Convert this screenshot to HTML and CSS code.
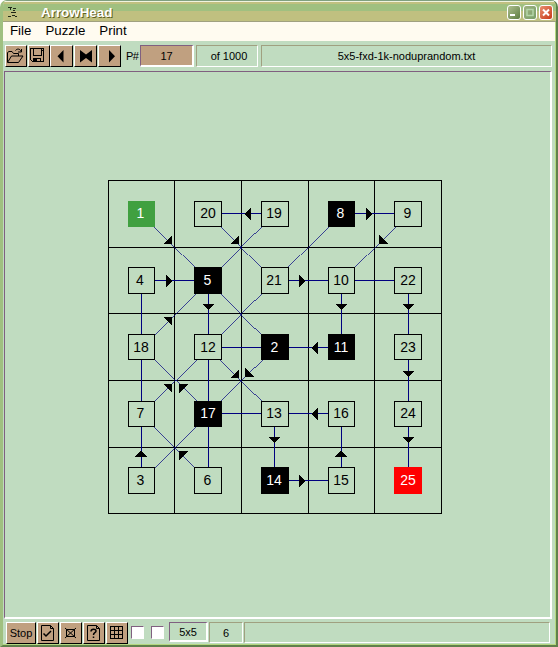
FILE: index.html
```html
<!DOCTYPE html>
<html lang="en">
<head>
<meta charset="utf-8">
<title>ArrowHead</title>
<link rel="stylesheet" href="styles.css">
</head>
<body>
<div class="window">
  <header class="titlebar">
    <svg class="app-icon" width="16" height="16" fill="none" stroke="#202818" shape-rendering="crispEdges"><path d="M0 2.500h4M5 3.500h3M2.500 3v2M5 5.500h2M3 7.500h5M0 11.500h3M4 10.500h3M7 11.500h2"/></svg>
    <span class="title">ArrowHead</span>
    <span class="caption min"><svg width="12" height="13"><path d="M2 9h5" stroke="#fff" stroke-width="2"/></svg></span>
    <span class="caption max"><svg width="12" height="13"><path d="M3 3.500h6v6h-6z" stroke="#b4d6a8" stroke-width="1.500" fill="none"/></svg></span>
    <span class="caption close"><svg width="12" height="13"><path d="M3 3.500l6 6M9 3.500l-6 6" stroke="#fff" stroke-width="2"/></svg></span>
  </header>
  <nav class="menu"><span>File</span><span>Puzzle</span><span>Print</span></nav>
  <div class="toolbar">
    <button class="btn b1"><svg width="20" height="20" fill="none" stroke="#000"><path d="M1.500 16V6.500L3 5.500h3l1.500 2h5V10M1.500 16.500l4-6.500H17l-4.500 6.500zM9.500 4.500C11 2.500 14 2.500 15 5.500M15.500 3v3H12"/></svg></button>
    <button class="btn b2"><svg width="20" height="20" fill="none" stroke="#000" shape-rendering="crispEdges"><path d="M1.500 2.500h13v13h-11l-2-2zM4.500 3v6h8V3M13 4.500h1M4.500 16v-4h7v4"/><path d="M5 12h3v4h-3z" fill="#000" stroke="none"/></svg></button>
    <button class="btn b3"><svg width="20" height="20"><path d="M11.500 4v12.500L5.500 10.250z"/></svg></button>
    <button class="btn b4"><svg width="20" height="20"><path d="M4 4v12.500l6-4.500 6 4.500V4l-6 4.500z"/></svg></button>
    <button class="btn b5"><svg width="20" height="20"><path d="M9 4v12.500l6-6.250z"/></svg></button>
    <span class="label">P#</span>
    <span class="field number">17</span>
    <span class="panel count">of 1000</span>
    <span class="panel file">5x5-fxd-1k-noduprandom.txt</span>
  </div>
  <main class="client">
    <svg class="board" width="336" height="336" viewBox="107 179 336 336">
      <g class="cells">
        <path d="M108.500 180v334M174.500 180v334M241.500 180v334M308.500 180v334M374.500 180v334M441.500 180v334M108 180.500h334M108 247.500h334M108 313.500h334M108 380.500h334M108 447.500h334M108 513.500h334"/>
      </g>
      <g class="links">
        <path d="M208.500 213.500H274.500M341.500 213.500H408.500M141.500 280.500H208.500V480.500M141.500 280.500V480.500M274.500 280.500H408.500V480.500M341.500 280.500V347.500H208.500M208.500 413.500H341.500V480.500H274.500V413.500"/>
        <path class="diagonal" d="M141.500 213.500L208.500 280.500L274.500 347.500M274.500 213.500L208.500 280.500L141.500 347.500M208.500 213.500L274.500 280.500M141.500 480.500L208.500 413.500L274.500 347.500M341.500 213.500L274.500 280.500L208.500 347.500L141.500 413.500L208.500 480.500M408.500 213.500L341.500 280.500M208.500 347.500L274.500 413.500M141.500 347.500L208.500 413.500"/>
      </g>
      <g class="arrows">
        <path d="M166 275v12l6.500-6zM366 208v12l6.500-6zM299 275v12l6.500-6zM299 475v12l6.500-6z"/>
        <path d="M251 208v12l-6.500-6zM318 342v12l-6.500-6zM318 408v12l-6.500-6z"/>
        <path d="M202.500 304h12l-6 6.500zM335.500 304h12l-6 6.500zM402.500 304h12l-6 6.500zM402.500 371h12l-6 6.500zM402.500 437h12l-6 6.500zM268.500 437h12l-6 6.500z"/>
        <path d="M135 457h12l-6-6.500zM335 457h12l-6-6.500z"/>
        <path d="M172 235v9h-9zM239 235v9h-9zM172 326v-9h-9zM379 235v9h9zM239 369v9h-9zM245 368v9h9zM172 393v-9h-9zM179 393v-9h9zM179 460v-9h9z"/>
      </g>
      <g class="nodes">
        <rect class="start" x="128.500" y="201.500" width="26" height="25"/>
        <rect x="194.500" y="201.500" width="27" height="25"/>
        <rect x="261.500" y="201.500" width="27" height="25"/>
        <rect class="given" x="328.500" y="201.500" width="26" height="25"/>
        <rect x="394.500" y="201.500" width="27" height="25"/>
        <rect x="128.500" y="267.500" width="26" height="26"/>
        <rect class="given" x="194.500" y="267.500" width="27" height="26"/>
        <rect x="261.500" y="267.500" width="27" height="26"/>
        <rect x="328.500" y="267.500" width="26" height="26"/>
        <rect x="394.500" y="267.500" width="27" height="26"/>
        <rect x="128.500" y="334.500" width="26" height="25"/>
        <rect x="194.500" y="334.500" width="27" height="25"/>
        <rect class="given" x="261.500" y="334.500" width="27" height="25"/>
        <rect class="given" x="328.500" y="334.500" width="26" height="25"/>
        <rect x="394.500" y="334.500" width="27" height="25"/>
        <rect x="128.500" y="401.500" width="26" height="25"/>
        <rect class="given" x="194.500" y="401.500" width="27" height="25"/>
        <rect x="261.500" y="401.500" width="27" height="25"/>
        <rect x="328.500" y="401.500" width="26" height="25"/>
        <rect x="394.500" y="401.500" width="27" height="25"/>
        <rect x="128.500" y="467.500" width="26" height="26"/>
        <rect x="194.500" y="467.500" width="27" height="26"/>
        <rect class="given" x="261.500" y="467.500" width="27" height="26"/>
        <rect x="328.500" y="467.500" width="26" height="26"/>
        <rect class="end" x="394.500" y="467.500" width="27" height="26"/>
      </g>
      <g class="nums">
        <text class="lit" x="140.500" y="218">1</text><text x="208" y="218">20</text><text x="274" y="218">19</text><text class="lit" x="340.500" y="218">8</text><text x="407.500" y="218">9</text>
        <text x="140" y="285">4</text><text class="lit" x="207.500" y="285">5</text><text x="274" y="285">21</text><text x="341" y="285">10</text><text x="408" y="285">22</text>
        <text x="141" y="352">18</text><text x="208" y="352">12</text><text class="lit" x="274.500" y="352">2</text><text class="lit" x="341" y="352">11</text><text x="408" y="352">23</text>
        <text x="140.500" y="418">7</text><text class="lit" x="208" y="418">17</text><text x="274" y="418">13</text><text x="341" y="418">16</text><text x="408" y="418">24</text>
        <text x="140.500" y="485">3</text><text x="207.500" y="485">6</text><text class="lit" x="274" y="485">14</text><text x="341" y="485">15</text><text class="lit" x="408" y="485">25</text>
      </g>
    </svg>
  </main>
  <footer class="statusbar">
    <button class="btn stop">Stop</button>
    <button class="btn s1"><svg width="20" height="20" fill="none" stroke="#000"><path d="M3.500 2.500h9l3 3v12h-12zM12.500 2.500v3h3"/><path d="M5.500 10.500l2.500 2.500 5-5" stroke-width="1.500"/></svg></button>
    <button class="btn s2"><svg width="20" height="20" fill="none" stroke="#000"><path d="M5.500 6.500h8v7h-8zM4 5l11 10M15 5L4 15"/></svg></button>
    <button class="btn s3"><svg width="20" height="20" fill="none" stroke="#000"><path d="M3.500 2.500h9l3 3v12h-12zM12.500 2.500v3h3"/><path d="M7 8.500c0-3 5-3 5-.5 0 2-2.500 1.500-2.500 4M9.500 13.500v1.500" stroke-width="1.500"/></svg></button>
    <button class="btn s4"><svg width="20" height="20" fill="none" stroke="#000" shape-rendering="crispEdges"><path d="M3.500 3.500h12v12h-12zM7.500 3v13M11.500 3v13M3 7.500h13M3 11.500h13"/></svg></button>
    <span class="check c1"></span><span class="check c2"></span>
    <span class="field size">5x5</span>
    <span class="panel level">6</span>
    <span class="panel message"></span>
  </footer>
</div>
</body>
</html>
```

FILE: styles.css
```css
* { box-sizing: border-box; }
html { background: #fff; }
body { margin: 0; font-family: "Liberation Sans", Arial, sans-serif; color: #000; }
.window {
  width: 558px; height: 647px; display: flex; flex-direction: column;
  background: #c0dcc0; overflow: hidden; border-radius: 7px 7px 0 0;
  border-left: 3px solid #a0c080; border-right: 2px solid #60804c; border-bottom: 2px solid #60804c;
  box-shadow: inset -1px -1px #b4d880;
}
.titlebar {
  height: 22px; flex: none; display: flex; align-items: flex-start; padding: 5px 3px 0 5px;
  background: linear-gradient(#80a080 0 1px, #f0f4e0 1px 2px, #c0c080 2px 4px, #a0c080 4px 11px, #c0c080 11px 21px, #a0a080 21px);
}
.app-icon { width: 16px; height: 16px; flex: none; }
.title { margin-left: 17px; margin-top: -1px; font-size: 13.400px; line-height: 17px; font-weight: bold; color: #fff; text-shadow: 1px 1px #606020; width: 80px; }
.caption { flex: none; width: 14px; height: 15px; border: 1px solid #fff; border-radius: 3px; overflow: hidden; display: block; margin-left: 2px; }
.caption svg { display: block; }
.min { margin-left: auto; background: linear-gradient(135deg, #b0c090, #5c7c40); }
.max { background: linear-gradient(135deg, #a0b080, #78a068); }
.close { background: linear-gradient(135deg, #e89070, #c83818); }
.menu { height: 19px; flex: none; background: #fffbf0; display: flex; gap: 14px; padding-left: 7px; margin-right: 1px; font-size: 13.300px; line-height: 17px; }
.toolbar { height: 29px; flex: none; display: flex; align-items: flex-start; padding: 4px 4px 0 2px; font-size: 11px; }
.btn { flex: none; width: 22px; height: 22px; padding: 0; margin: 0 1px 0 0; border: 1px solid #000; border-top-color: #fff; border-left-color: #fff; background: #c0a080; font: inherit; color: #000; display: flex; align-items: center; justify-content: center; border-radius: 0; }
.btn svg { display: block; flex: none; }
.b2 { margin-right: 0; }
.b3, .b4, .b5 { width: 23px; }
.label { width: 18px; padding-left: 4px; line-height: 23px; white-space: nowrap; letter-spacing: -.5px; }
.field, .panel { height: 22px; line-height: 20px; text-align: center; border: 1px solid; flex: none; }
.field { border-width: 2px; border-color: #806080 #fff #fff #806080; line-height: 18px; }
.panel { border-color: #a0a080 #fff #fff #a0a080; }
.number { width: 54px; background: #c0a080; border-top-width: 1px; border-left-width: 1px; line-height: 20px; }
.count { width: 62px; margin-left: 2px; padding-left: 4px; }
.file { flex: 1; margin-left: 3px; }
.client { height: 549px; flex: none; margin: 0 4px 0 1px; border: 2px solid; border-color: #806080 #fff #fff #806080; border-width: 2px 2px 2px 1px; border-top-width: 1px; margin-top: 1px; height: 548px; }
.toolbar { height: 29px; }
.board { display: block; margin: 107px 0 0 102px; }
.cells { stroke: #000; fill: none; shape-rendering: crispEdges; }
.links { stroke: #000080; fill: none; shape-rendering: crispEdges; }
.diagonal { stroke-width: .71px; }
.arrows { shape-rendering: crispEdges; }
.nodes rect { fill: #c0dcc0; stroke: #000; shape-rendering: crispEdges; }
.nodes .given { fill: #000; }
.nodes .start { fill: #40a040; stroke: #40a040; }
.nodes .end { fill: #f00; stroke: #f00; }
.nums { font-size: 14px; text-anchor: middle; }
.nums .lit { fill: #fff; }
.statusbar { flex: 1; display: flex; align-items: flex-start; padding: 3px 6px 0 3px; font-size: 11px; }
.stop { width: 30px; }
.check { flex: none; width: 13px; height: 13px; margin: 4px 0 0 2px; background: #fff; border: 1px solid #fff; border-top-color: #806080; border-left-color: #806080; }
.c2 { margin-left: 7px; }
.size { width: 39px; height: 20px; margin-left: 5px; line-height: 19px; border-top-width: 1px; border-left-width: 1px; }
.level { width: 34px; margin-left: 1px; height: 21px; }
.message { flex: 1; margin-left: 1px; height: 21px; }
```
